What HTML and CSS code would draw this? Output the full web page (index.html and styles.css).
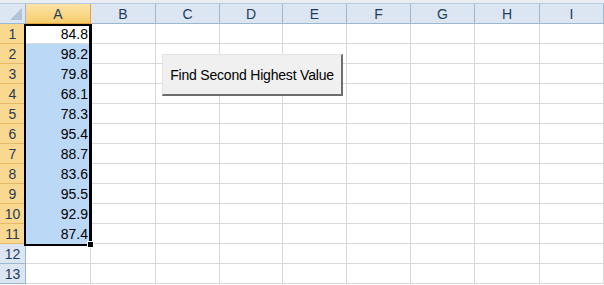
FILE: index.html
```html
<!DOCTYPE html>
<html lang="en">
<head>
  <meta charset="UTF-8" />
  <title>Find Second Highest Value</title>
  <link rel="stylesheet" href="styles.css">
</head>
<body>
  <div class="sheet">
    <div class="topbar"></div>
    <div class="grid">
      <div class="corner"><span class="tri"></span></div>
      <div class="ch sel">A</div><div class="ch">B</div><div class="ch">C</div><div class="ch">D</div><div class="ch">E</div><div class="ch">F</div><div class="ch">G</div><div class="ch">H</div><div class="ch">I</div>

      <div class="rh sel">1</div><div class="c num">84.8</div><div class="c"></div><div class="c"></div><div class="c"></div><div class="c"></div><div class="c"></div><div class="c"></div><div class="c"></div><div class="c"></div>
      <div class="rh sel">2</div><div class="c num hl">98.2</div><div class="c"></div><div class="c"></div><div class="c"></div><div class="c"></div><div class="c"></div><div class="c"></div><div class="c"></div><div class="c"></div>
      <div class="rh sel">3</div><div class="c num hl">79.8</div><div class="c"></div><div class="c"></div><div class="c"></div><div class="c"></div><div class="c"></div><div class="c"></div><div class="c"></div><div class="c"></div>
      <div class="rh sel">4</div><div class="c num hl">68.1</div><div class="c"></div><div class="c"></div><div class="c"></div><div class="c"></div><div class="c"></div><div class="c"></div><div class="c"></div><div class="c"></div>
      <div class="rh sel">5</div><div class="c num hl">78.3</div><div class="c"></div><div class="c"></div><div class="c"></div><div class="c"></div><div class="c"></div><div class="c"></div><div class="c"></div><div class="c"></div>
      <div class="rh sel">6</div><div class="c num hl">95.4</div><div class="c"></div><div class="c"></div><div class="c"></div><div class="c"></div><div class="c"></div><div class="c"></div><div class="c"></div><div class="c"></div>
      <div class="rh sel">7</div><div class="c num hl">88.7</div><div class="c"></div><div class="c"></div><div class="c"></div><div class="c"></div><div class="c"></div><div class="c"></div><div class="c"></div><div class="c"></div>
      <div class="rh sel">8</div><div class="c num hl">83.6</div><div class="c"></div><div class="c"></div><div class="c"></div><div class="c"></div><div class="c"></div><div class="c"></div><div class="c"></div><div class="c"></div>
      <div class="rh sel">9</div><div class="c num hl">95.5</div><div class="c"></div><div class="c"></div><div class="c"></div><div class="c"></div><div class="c"></div><div class="c"></div><div class="c"></div><div class="c"></div>
      <div class="rh sel">10</div><div class="c num hl">92.9</div><div class="c"></div><div class="c"></div><div class="c"></div><div class="c"></div><div class="c"></div><div class="c"></div><div class="c"></div><div class="c"></div>
      <div class="rh sel">11</div><div class="c num hl">87.4</div><div class="c"></div><div class="c"></div><div class="c"></div><div class="c"></div><div class="c"></div><div class="c"></div><div class="c"></div><div class="c"></div>
      <div class="rh">12</div><div class="c"></div><div class="c"></div><div class="c"></div><div class="c"></div><div class="c"></div><div class="c"></div><div class="c"></div><div class="c"></div><div class="c"></div>
      <div class="rh">13</div><div class="c"></div><div class="c"></div><div class="c"></div><div class="c"></div><div class="c"></div><div class="c"></div><div class="c"></div><div class="c"></div><div class="c"></div>
    </div>

    <div class="selection"></div>
    <div class="fill-handle"></div>
    <button class="macro-btn">Find Second Highest Value</button>
  </div>
</body>
</html>
```

FILE: styles.css
```css
* {
  box-sizing: border-box;
  margin: 0;
  padding: 0;
}

body {
  font-family: 'Liberation Sans', Arial, sans-serif;
  background: #fff;
  width: 604px;
  height: 285px;
  overflow: hidden;
}

.sheet {
  position: relative;
  width: 604px;
  height: 285px;
}

.topbar {
  height: 4px;
  background: #e9eef5;
  border-bottom: 1px solid #b7c8da;
}

.grid {
  display: grid;
  grid-template-columns: 26px 65px 65px 64px 63px 64px 64px 64px 65px 64px;
  grid-template-rows: 20px;
  grid-auto-rows: 20px;
}

.corner,
.ch,
.rh {
  background: #dce6f2;
  border-right: 1px solid #9eb6ce;
  border-bottom: 1px solid #9eb6ce;
  color: #1f3a5c;
  font-size: 14px;
  display: flex;
  align-items: center;
  justify-content: center;
}

.corner {
  position: relative;
}

.tri {
  position: absolute;
  right: 3px;
  bottom: 3px;
  width: 0;
  height: 0;
  border-left: 12px solid transparent;
  border-bottom: 12px solid #b3c3d6;
}

.ch.sel {
  background: linear-gradient(#fbe3a6, #f6cd6d);
  border-right-color: #e5a53c;
  border-bottom-color: #e5a53c;
  color: #2a3a55;
}

.rh.sel {
  background: #f9d88f;
  border-right-color: #e5a53c;
  border-bottom-color: #e6b96a;
  color: #2a3a55;
}

.c {
  border-right: 1px solid #d9d9d9;
  border-bottom: 1px solid #d9d9d9;
  font-size: 14px;
}

.num {
  display: flex;
  align-items: flex-end;
  justify-content: flex-end;
  padding: 0 2px 1px 0;
  color: #000;
}

.hl {
  background: #bcd8f7;
  border-bottom-color: #bcd8f7;
}

.selection {
  position: absolute;
  left: 24px;
  top: 24px;
  width: 68px;
  height: 222px;
  border: 2px solid #000;
  border-width: 2px 3px 2px 2px;
  pointer-events: none;
}

.fill-handle {
  position: absolute;
  left: 87px;
  top: 241px;
  width: 7px;
  height: 7px;
  background: #000;
  border: 1px solid #fff;
}

.macro-btn {
  position: absolute;
  left: 162px;
  top: 54px;
  width: 181px;
  height: 42px;
  background: #f0f0f0;
  border-top: 1px solid #e3e3e3;
  border-left: 1px solid #e3e3e3;
  border-right: 2px solid #6d6d6d;
  border-bottom: 2px solid #6d6d6d;
  font-family: 'Liberation Sans', Arial, sans-serif;
  font-size: 14px;
  letter-spacing: -0.2px;
  color: #000;
  cursor: pointer;
}
```
